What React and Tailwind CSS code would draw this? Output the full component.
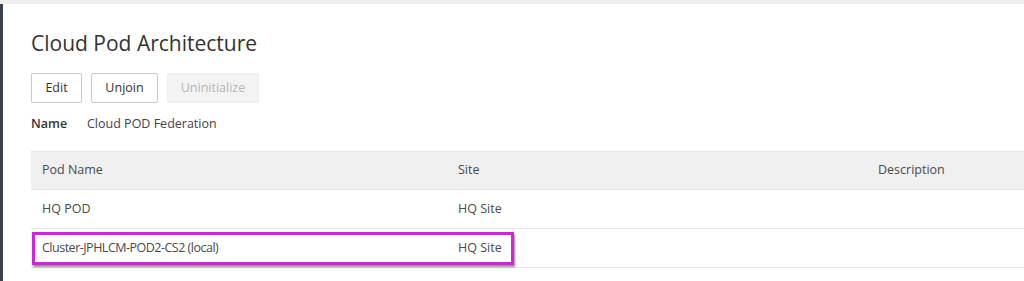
import React from "react";

const rows = [
  { name: "HQ POD", site: "HQ Site", description: "" },
  { name: "Cluster-JPHLCM-POD2-CS2 (local)", site: "HQ Site", description: "", highlight: true },
];

const Row = ({ row }) => (
  <div className="relative flex h-[39px] items-center border-b border-[#e8e8e8] bg-white">
    <div className={row.highlight ? "w-[427px] pl-[11px] tracking-[-0.5px]" : "w-[427px] pl-[11px]"}>{row.name}</div>
    <div className="w-[420px]">{row.site}</div>
    <div className="flex-1">{row.description}</div>
    {row.highlight && (
      <div className="absolute left-[1px] top-[3px] h-[33px] w-[482px] border-[3px] border-[#d622e0] shadow-[1px_2px_2px_rgba(0,0,0,0.45)]" />
    )}
  </div>
);

export default function App() {
  return (
    <div
      className="h-[281px] w-[1024px] overflow-hidden bg-white text-[12.5px] text-[#4a4a4a]"
      style={{ fontFamily: '"Open Sans", "Noto Sans", sans-serif' }}
    >
      <div className="h-[4px] bg-[#efefef]" />
      <div className="flex h-[277px]">
        <div className="w-[3px] bg-[#3b4049]" />
        <div className="flex-1 pl-[28px] pt-[25px]">
          <h1 className="text-[21px] leading-[28px] text-[#333]">Cloud Pod Architecture</h1>

          <div className="mt-[16px] flex gap-[9px]">
            <button className="h-[30px] w-[51px] rounded-[2px] border border-[#c8c8c8] bg-white text-[#333]">Edit</button>
            <button className="h-[30px] w-[67px] rounded-[2px] border border-[#c8c8c8] bg-white text-[#333]">Unjoin</button>
            <button className="h-[30px] w-[92px] rounded-[2px] border border-[#f0f0f0] bg-[#f3f3f3] text-[#b5b5b5]">Uninitialize</button>
          </div>

          <div className="mt-[11px] flex h-[20px] items-center">
            <span className="w-[56px] font-semibold text-[#333]">Name</span>
            <span className="text-[#444]">Cloud POD Federation</span>
          </div>

          <div className="mt-[17px]">
            <div className="flex h-[39px] items-center border-y border-[#e3e3e3] bg-[#f0f0f0]">
              <div className="w-[427px] pl-[11px]">Pod Name</div>
              <div className="w-[420px]">Site</div>
              <div className="flex-1">Description</div>
            </div>
            {rows.map((row) => (
              <Row key={row.name} row={row} />
            ))}
          </div>
        </div>
      </div>
    </div>
  );
}
